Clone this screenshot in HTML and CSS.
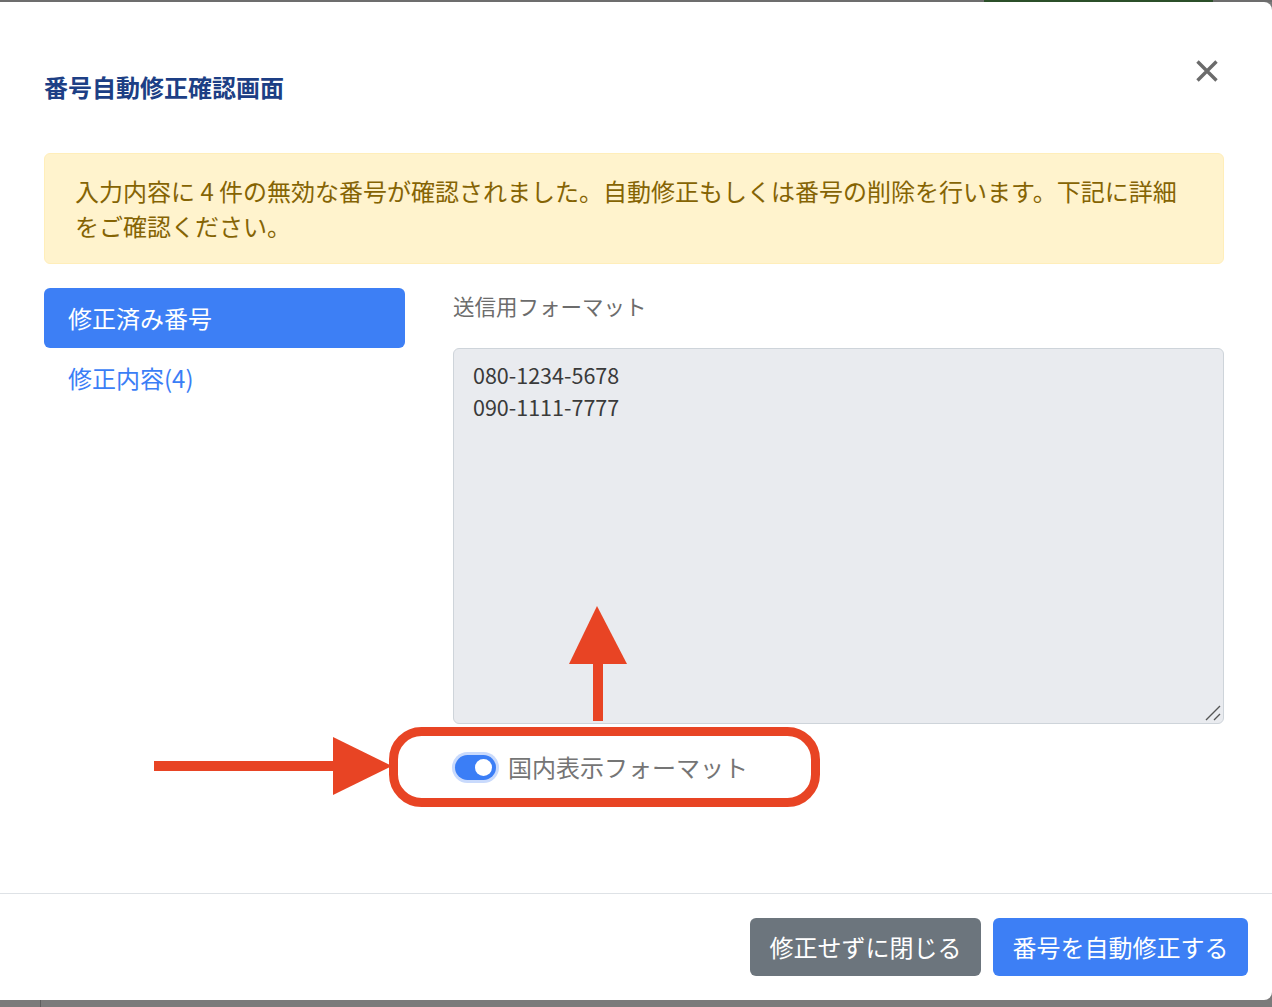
FILE: index.html
```html
<!DOCTYPE html>
<html lang="ja">
<head>
<meta charset="utf-8">
<title>番号自動修正確認画面</title>
<link rel="stylesheet" href="styles.css">
</head>
<body>
<div class="backdrop-top"><span class="bar-green"></span></div>
<div class="modal">
  <div class="modal-header">
    <h5 class="modal-title">番号自動修正確認画面</h5>
    <button class="close-btn" aria-label="閉じる">
      <svg width="24" height="24" viewBox="0 0 24 24"><path d="M2.5 2.5 L21.5 21.5 M21.5 2.5 L2.5 21.5" stroke="#6b6b6b" stroke-width="3.4" stroke-linecap="butt" fill="none"/></svg>
    </button>
  </div>
  <div class="alert">入力内容に 4 件の無効な番号が確認されました。自動修正もしくは番号の削除を行います。下記に詳細をご確認ください。</div>
  <div class="content">
    <nav class="nav">
      <a class="nav-item active">修正済み番号</a>
      <a class="nav-item">修正内容(4)</a>
    </nav>
    <div class="pane">
      <div class="pane-label">送信用フォーマット</div>
      <div class="numbers-wrap">
        <textarea class="numbers" readonly>080-1234-5678
090-1111-7777</textarea>
        <svg class="grip" width="16" height="16" viewBox="0 0 16 16"><path d="M1 15 L15 1 M9 15 L15 9" stroke="#555" stroke-width="1.4" fill="none"/></svg>
      </div>
      <div class="toggle-row">
        <span class="switch"><span class="knob"></span></span>
        <span class="toggle-label">国内表示フォーマット</span>
      </div>
    </div>
  </div>
  <div class="modal-footer">
    <button class="btn btn-secondary">修正せずに閉じる</button>
    <button class="btn btn-primary">番号を自動修正する</button>
  </div>
</div>
<div class="backdrop-bottom"><span class="sep"></span></div>
<svg class="annot" width="1272" height="1007" viewBox="0 0 1272 1007">
  <rect x="393.5" y="731.5" width="422" height="71" rx="28" ry="28" fill="none" stroke="#e84424" stroke-width="9"/>
  <rect x="154" y="761" width="182" height="10" fill="#e84424"/>
  <polygon points="333,737 392,766 333,795" fill="#e84424"/>
  <rect x="593" y="660" width="10" height="61" fill="#e84424"/>
  <polygon points="597,606 627,664 569,664" fill="#e84424"/>
</svg>
</body>
</html>
```
FILE: styles.css
```css
* { box-sizing: border-box; }
html, body {
  margin: 0;
  padding: 0;
  width: 1272px;
  height: 1007px;
  overflow: hidden;
}
body {
  background: #797979;
  font-family: "Noto Sans CJK JP", "Noto Sans", sans-serif;
  position: relative;
}
.backdrop-top {
  height: 2px;
  background: #6d6d6d;
  display: flex;
}
.bar-green {
  margin-left: 984px;
  width: 229px;
  background: #2b4f29;
}
.modal {
  height: 998px;
  background: #fff;
  border-radius: 0 8px 8px 0;
  display: flex;
  flex-direction: column;
}
.modal-header {
  display: flex;
  justify-content: space-between;
  align-items: flex-start;
  padding: 57px 53px 0 44px;
}
.modal-title {
  margin: 10px 0 1px 0;
  font-size: 24px;
  line-height: 36px;
  font-weight: 700;
  color: #1d3f85;
}
.close-btn {
  border: 0;
  background: transparent;
  padding: 0;
  width: 24px;
  height: 24px;
  display: flex;
}
.alert {
  margin: 47px 48px 0 44px;
  padding: 19px 32px 20px 30px;
  background: #fff3cd;
  border: 1px solid #ffeeba;
  border-radius: 6px;
  color: #856404;
  font-size: 24px;
  line-height: 35px;
}
.content {
  display: flex;
  gap: 48px;
  padding: 24px 48px 0 44px;
}
.nav {
  width: 361px;
  flex: none;
  display: flex;
  flex-direction: column;
}
.nav-item {
  height: 60px;
  display: flex;
  align-items: center;
  padding-left: 24px;
  padding-bottom: 2px;
  font-size: 24px;
  color: #3b7ef6;
  border-radius: 6px;
}
.nav-item.active {
  background: #3d7ff5;
  color: #fff;
}
.pane {
  flex: 1;
  display: flex;
  flex-direction: column;
}
.pane-label {
  margin-top: 2px;
  font-size: 21.5px;
  line-height: 32px;
  color: #6c6c6c;
  margin-bottom: 26px;
}
.numbers-wrap {
  position: relative;
  width: 771px;
  height: 376px;
}
.numbers {
  display: block;
  width: 771px;
  height: 376px;
  background: #e9ebef;
  border: 1px solid #ced4da;
  border-radius: 6px;
  padding: 10px 19px;
  font-family: "Noto Sans CJK JP", "Noto Sans", sans-serif;
  font-size: 21.5px;
  line-height: 32px;
  color: #3a3a3a;
  margin: 0;
  outline: none;
  resize: none;
}
.grip {
  position: absolute;
  right: 3px;
  bottom: 3px;
}
.toggle-row {
  margin-top: 27px;
  height: 32px;
  display: flex;
  align-items: center;
}
.switch {
  margin-left: 2px;
  width: 41px;
  height: 25px;
  border-radius: 13px;
  background: #3b7ef6;
  box-shadow: 0 0 0 3px #c9dafc;
  display: flex;
  align-items: center;
  justify-content: flex-end;
  padding-right: 4px;
}
.knob {
  width: 17px;
  height: 17px;
  border-radius: 50%;
  background: #fff;
}
.toggle-label {
  margin-left: 12px;
  font-size: 24px;
  line-height: 32px;
  color: #757575;
}
.modal-footer {
  margin-top: auto;
  border-top: 1px solid #dee2e6;
  padding: 24px 24px 24px 0;
  display: flex;
  justify-content: flex-end;
  gap: 12px;
}
.btn {
  border: 0;
  border-radius: 6px;
  height: 58px;
  padding: 0 19.5px 2px;
  font-family: "Noto Sans CJK JP", "Noto Sans", sans-serif;
  font-size: 24px;
  color: #fff;
  display: flex;
  align-items: center;
}
.btn-secondary { background: #6c757d; }
.btn-primary { background: #3d7ff5; }
.backdrop-bottom {
  height: 7px;
  background: #7b7b7b;
  display: flex;
}
.sep {
  margin-left: 40px;
  width: 1px;
  background: #5e5e5e;
}
.annot {
  position: absolute;
  left: 0;
  top: 0;
  pointer-events: none;
}
```
